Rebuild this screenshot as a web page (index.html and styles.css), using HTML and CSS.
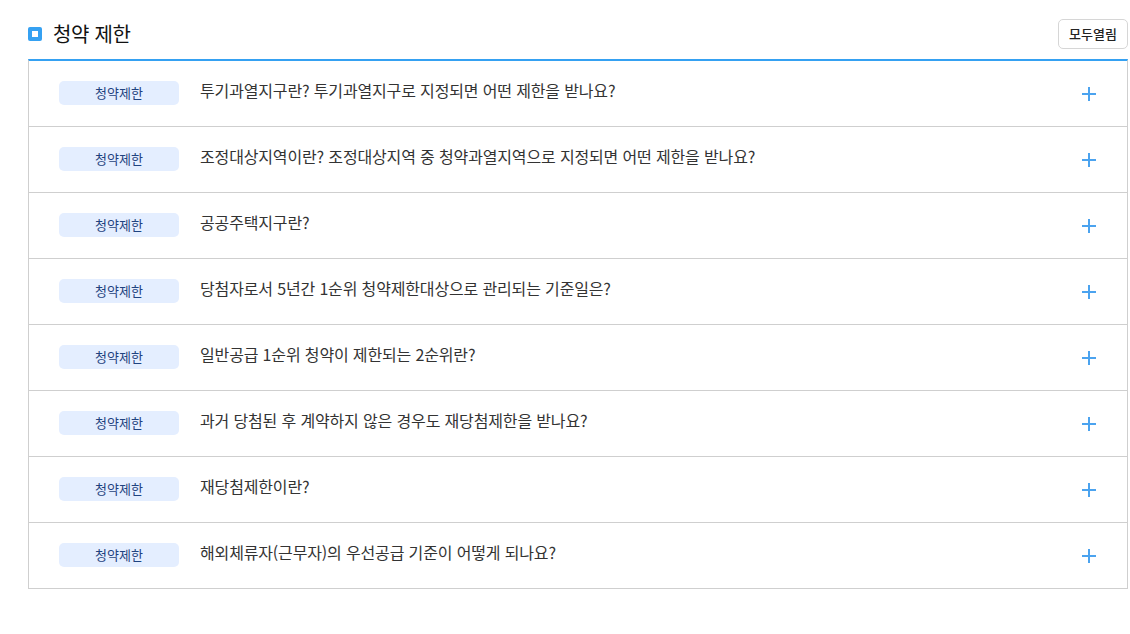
FILE: index.html
```html
<!DOCTYPE html>
<html lang="ko">
<head>
<meta charset="utf-8">
<link rel="stylesheet" href="styles.css">
</head>
<body>
<div class="wrap">
  <div class="head">
    <h2 class="title"><span class="ico"></span>청약 제한</h2>
    <button class="all">모두열림</button>
  </div>
  <ul class="list">
    <li class="row"><span class="badge">청약제한</span><span class="q">투기과열지구란? 투기과열지구로 지정되면 어떤 제한을 받나요?</span><span class="plus"></span></li>
    <li class="row"><span class="badge">청약제한</span><span class="q">조정대상지역이란? 조정대상지역 중 청약과열지역으로 지정되면 어떤 제한을 받나요?</span><span class="plus"></span></li>
    <li class="row"><span class="badge">청약제한</span><span class="q">공공주택지구란?</span><span class="plus"></span></li>
    <li class="row"><span class="badge">청약제한</span><span class="q">당첨자로서 5년간 1순위 청약제한대상으로 관리되는 기준일은?</span><span class="plus"></span></li>
    <li class="row"><span class="badge">청약제한</span><span class="q">일반공급 1순위 청약이 제한되는 2순위란?</span><span class="plus"></span></li>
    <li class="row"><span class="badge">청약제한</span><span class="q">과거 당첨된 후 계약하지 않은 경우도 재당첨제한을 받나요?</span><span class="plus"></span></li>
    <li class="row"><span class="badge">청약제한</span><span class="q">재당첨제한이란?</span><span class="plus"></span></li>
    <li class="row"><span class="badge">청약제한</span><span class="q">해외체류자(근무자)의 우선공급 기준이 어떻게 되나요?</span><span class="plus"></span></li>
  </ul>
</div>
</body>
</html>
```
FILE: styles.css
```css
* { box-sizing: border-box; }
html, body { margin: 0; padding: 0; background: #fff; }
body {
  font-family: "Noto Sans CJK KR", "Noto Sans", sans-serif;
  color: #222;
}
.wrap {
  width: 1100px;
  margin-left: 28px;
  padding-top: 18px;
}
.head {
  display: flex;
  align-items: center;
  justify-content: space-between;
  height: 31px;
  margin-bottom: 10px;
}
.title {
  margin: 0;
  display: flex;
  align-items: center;
  font-size: 20px;
  font-weight: 400;
  color: #111;
  letter-spacing: -0.3px;
}
.ico {
  width: 14px;
  height: 14px;
  border-radius: 2px;
  background: #35a1f2;
  margin-right: 11px;
  display: flex;
  align-items: center;
  justify-content: center;
}
.ico::after {
  content: "";
  width: 6px;
  height: 6px;
  background: #fff;
}
.all {
  font-family: inherit;
  height: 30px;
  width: 70px;
  padding: 0;
  background: #fff;
  border: 1px solid #d6d6d6;
  border-radius: 5px;
  font-size: 13px;
  font-weight: 500;
  color: #222;
}
.list {
  list-style: none;
  margin: 0;
  padding: 0;
  border-top: 2px solid #35a1f2;
  border-left: 1px solid #cfcfcf;
  border-right: 1px solid #cfcfcf;
  width: 1100px;
}
.row {
  display: flex;
  align-items: center;
  height: 66px;
  border-bottom: 1px solid #cfcfcf;
  padding-left: 30px;
  padding-right: 31px;
  padding-bottom: 2px;
}
.badge {
  width: 120px;
  height: 24px;
  border-radius: 5px;
  background: #e4eeff;
  color: #1f4380;
  font-size: 13px;
  display: flex;
  align-items: center;
  justify-content: center;
  flex-shrink: 0;
}
.q {
  margin-left: 21px;
  margin-bottom: 5px;
  font-size: 16px;
  color: #333;
  flex: 1;
  letter-spacing: -0.15px;
}
.plus {
  width: 14px;
  height: 14px;
  position: relative;
  margin-top: 2px;
}
.plus::before, .plus::after {
  content: "";
  position: absolute;
  background: #4ba3ef;
}
.plus::before { left: 0; right: 0; top: 6px; height: 2px; }
.plus::after { top: 0; bottom: 0; left: 6px; width: 2px; }
```
